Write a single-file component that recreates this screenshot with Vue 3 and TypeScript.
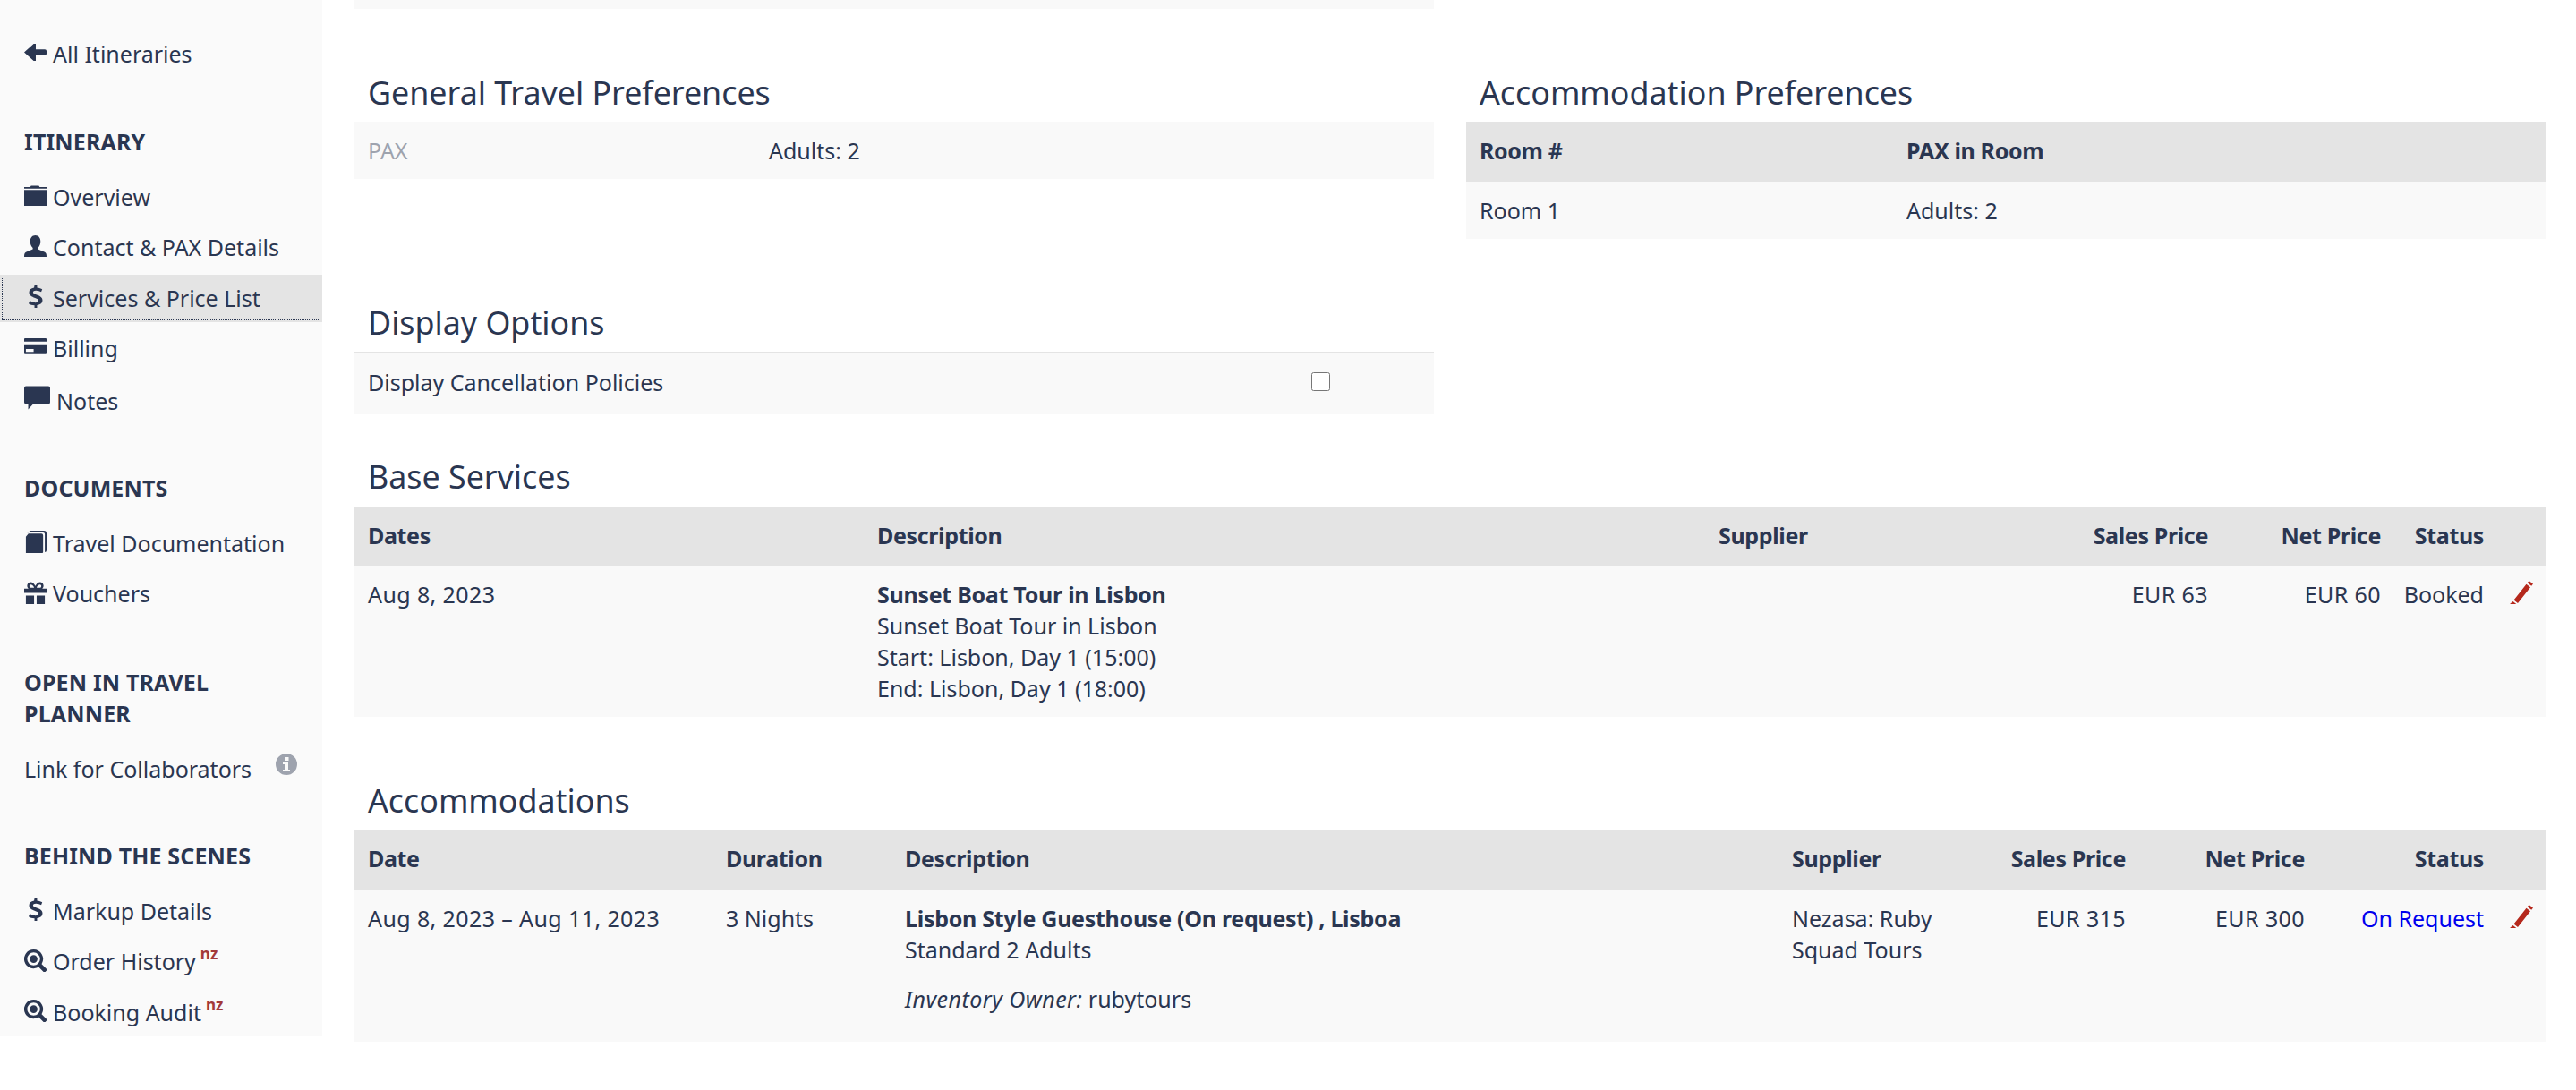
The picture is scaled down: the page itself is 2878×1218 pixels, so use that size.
<script setup lang="ts">
type Item = { label: string; icon: string; active?: boolean; nz?: boolean; wide?: boolean }
const paths: Record<string, string> = {
  back: 'M0 13 11 3h2.500v6.500H24a2 2 0 0 1 2 2v3a2 2 0 0 1-2 2H13.500V23H11z',
  folder: 'M0 3h7l1-1.500h9l1 1.500h8v2H0zM0 6.500h26V25H0z',
  user: 'M13 0c3.800 0 6 3 6 7 0 3-1 5.500-3 7.500v1.500l8 3.500c1.500.7 2 2.500 2 5.500H0c0-3 .5-4.800 2-5.500l8-3.500v-1.500c-2-2-3-4.500-3-7.500 0-4 2.200-7 6-7z',
  usd: 'M12 0h3v2.600c2.600.3 4.700 1.100 6 1.900l-1.200 3.100c-1.600-.9-3.700-1.700-6.100-1.700-2.200 0-3.400.8-3.400 2 0 1.400 1.400 2 4.300 3 4.300 1.400 6.700 3.100 6.700 6.300 0 3-2.200 5.200-6.300 5.800V26h-3v-2.800c-2.700-.2-5.300-1.100-6.800-2.200l1.300-3.200c1.800 1.200 4.100 2.100 6.500 2.100 2.300 0 3.700-.9 3.700-2.300 0-1.400-1.200-2.100-4-3.100-4.100-1.400-7-3-7-6.400 0-2.900 2.100-5 5.800-5.500z',
  card: 'M1 2h24a1 1 0 0 1 1 1v3H0V3a1 1 0 0 1 1-1zM0 9h26v10.500a1 1 0 0 1-1 1H1a1 1 0 0 1-1-1zm2 5.500V18h9v-3.500z',
  comment: 'M2 0h25a2 2 0 0 1 2 2v16a2 2 0 0 1-2 2H10l-5.500 6v-6H2a2 2 0 0 1-2-2V2a2 2 0 0 1 2-2z',
  book: 'M7 0h16a3 3 0 0 1 3 3v20a2 2 0 0 1-2 2V4a2 2 0 0 0-2-2H6a3 3 0 0 0-3 1.500zM5 3.500h15a2 2 0 0 1 2 2V25a1 1 0 0 1-1 1H2V7z',
  gift: 'M2 26h9.500V16H2zM14.500 26H24V16h-9.500zM0 8h5C3 6.500 3 3 5 1.500 7.500-.5 11 1 13 5c2-4 5.500-5.500 8-3.500C23 3 23 6.500 21 8h5v5H0zm7.500-4.500C6 3.500 5.500 6 7 7h4.500C11 5 9 3.500 7.500 3.500zm11 0C17 3.500 15 5 14.500 7H19c1.500-1 1-3.500-.5-3.500z',
  zoom: 'M11 0a11 11 0 0 1 9.300 16.800l5.700 5.700a1.500 1.500 0 0 1 0 2L24.500 26a1.500 1.500 0 0 1-2 0l-5.700-5.700A11 11 0 1 1 11 0zm0 3.500a7.500 7.500 0 1 0 0 15 7.500 7.500 0 0 0 0-15zM11 6.500a4.500 4.500 0 1 1 0 9 4.500 4.500 0 0 1 0-9z',
}
const pencil = 'M21.500 0l4.500 3.500-1.800 2.300-4.500-3.500zM18.500 3.800 23 7.300 9 25l-4.500-3.500zM3.500 23l3.800 3H0z'
const groups: { title: string; cls: string; items: Item[] }[] = [
  {
    title: 'ITINERARY',
    cls: 'g-itin',
    items: [
      { label: 'Overview', icon: 'folder' },
      { label: 'Contact & PAX Details', icon: 'user' },
      { label: 'Services & Price List', icon: 'usd', active: true },
      { label: 'Billing', icon: 'card' },
      { label: 'Notes', icon: 'comment', wide: true },
    ],
  },
  {
    title: 'DOCUMENTS',
    cls: 'g-docs',
    items: [
      { label: 'Travel Documentation', icon: 'book' },
      { label: 'Vouchers', icon: 'gift' },
    ],
  },
]
const behind: Item[] = [
  { label: 'Markup Details', icon: 'usd' },
  { label: 'Order History', icon: 'zoom', nz: true },
  { label: 'Booking Audit', icon: 'zoom', nz: true },
]
</script>

<template>
  <div class="page">
    <aside class="side">
      <a class="item">
        <svg class="ic" viewBox="0 0 26 26"><path :d="paths.back" /></svg>
        <span>All Itineraries</span>
      </a>
      <section v-for="g in groups" :key="g.title" :class="g.cls">
        <h3>{{ g.title }}</h3>
        <a v-for="it in g.items" :key="it.label" class="item" :class="{ active: it.active, notes: it.wide }">
          <svg class="ic" :class="{ wide: it.wide }" :viewBox="it.wide ? '0 0 29 26' : '0 0 26 26'">
            <path fill-rule="evenodd" :d="paths[it.icon]" />
          </svg>
          <span>{{ it.label }}</span>
        </a>
      </section>
      <section class="g-open">
        <h3>OPEN IN TRAVEL PLANNER</h3>
        <a class="item plain">
          <span>Link for Collaborators</span>
          <svg class="info" viewBox="0 0 24 24"><path fill-rule="evenodd" d="M12 0a12 12 0 1 1 0 24 12 12 0 0 1 0-24zM10 4v4h4.500V4zM8 10v2h2v6H8v2h8v-2h-2v-8z" /></svg>
        </a>
      </section>
      <section class="g-behind">
        <h3>BEHIND THE SCENES</h3>
        <a v-for="it in behind" :key="it.label" class="item">
          <svg class="ic" viewBox="0 0 26 26"><path fill-rule="evenodd" :d="paths[it.icon]" /></svg>
          <span>{{ it.label }}</span><sup v-if="it.nz">nz</sup>
        </a>
      </section>
    </aside>

    <main class="main">
      <div class="topband"></div>
      <div class="prefs">
        <div>
          <h2>General Travel Preferences</h2>
          <div class="row kv"><span class="muted">PAX</span><span>Adults: 2</span></div>
        </div>
        <div>
          <h2>Accommodation Preferences</h2>
          <div class="head rooms"><span>Room #</span><span>PAX in Room</span></div>
          <div class="row rooms"><span>Room 1</span><span>Adults: 2</span></div>
        </div>
      </div>

      <div class="display">
        <h2>Display Options</h2>
        <div class="row opt">
          <span>Display Cancellation Policies</span>
          <input type="checkbox" />
        </div>
      </div>

      <h2 class="t-base">Base Services</h2>
      <div class="head base">
        <span>Dates</span><span>Description</span><span>Supplier</span>
        <span class="r">Sales Price</span><span class="r">Net Price</span><span class="r">Status</span><span></span>
      </div>
      <div class="row base b-row">
        <span class="num">Aug 8, 2023</span>
        <div class="desc">
          <strong>Sunset Boat Tour in Lisbon</strong>
          <div>Sunset Boat Tour in Lisbon</div>
          <div>Start: Lisbon, Day 1 (15:00)</div>
          <div>End: Lisbon, Day 1 (18:00)</div>
        </div>
        <span></span>
        <span class="r num">EUR 63</span><span class="r num">EUR 60</span><span class="r">Booked</span>
        <svg class="pencil" viewBox="0 0 26 26"><path :d="pencil" /></svg>
      </div>

      <h2 class="t-acc">Accommodations</h2>
      <div class="head acc">
        <span>Date</span><span>Duration</span><span>Description</span><span>Supplier</span>
        <span class="r">Sales Price</span><span class="r">Net Price</span><span class="r">Status</span><span></span>
      </div>
      <div class="row acc a-row">
        <span class="num">Aug 8, 2023 – Aug 11, 2023</span>
        <span>3 Nights</span>
        <div class="desc">
          <strong>Lisbon Style Guesthouse (On request) , Lisboa</strong>
          <div>Standard 2 Adults</div>
          <div class="owner"><em>Inventory Owner:</em> rubytours</div>
        </div>
        <span>Nezasa: Ruby<br />Squad Tours</span>
        <span class="r num">EUR 315</span><span class="r num">EUR 300</span><span class="r blue">On Request</span>
        <svg class="pencil" viewBox="0 0 26 26"><path :d="pencil" /></svg>
      </div>
    </main>
  </div>
</template>

<style>
html, body { margin: 0; background: #fff; overflow: hidden; }
</style>

<style scoped>
.page {
  display: flex;
  align-items: flex-start;
  height: 1218px;
  overflow: hidden;
  font-family: "Noto Sans", "Open Sans", sans-serif;
  font-size: 25px;
  line-height: 35px;
  color: #2a3651;
}
.side {
  width: 360px;
  height: 1158px;
  flex: none;
  background: #fafafa;
  box-sizing: border-box;
  padding-top: 33.500px;
}
.side h3 {
  margin: 0 0 18px;
  padding: 0 27px;
  font-size: 25px;
  line-height: 35px;
  font-weight: 700;
  letter-spacing: .15px;
}
.item {
  display: flex;
  align-items: center;
  height: 53px;
  margin-bottom: 3.500px;
  padding: 0 27px;
  gap: 7px;
  box-sizing: border-box;
  white-space: nowrap;
}
.item.notes { margin-top: 5.500px; }
.item.active {
  background: #e4e4e4;
  outline: 1px dotted #2a3651;
  outline-offset: -3px;
}
.ic { width: 25px; height: 25px; fill: #2a3651; flex: none; margin-top: -3px; }
.ic.wide { width: 29px; height: 27px; margin-top: -7px; }
sup {
  color: #a33a3a;
  font-size: 17px;
  font-weight: 700;
  line-height: 1;
  align-self: flex-start;
  margin: 9px 0 0 -2px;
}
.g-itin { margin-top: 54px; }
.g-docs { margin-top: 53px; }
.g-open { margin-top: 54.500px; }
.g-behind { margin-top: 53px; }
.plain { justify-content: space-between; padding-right: 28px; }
.info { width: 24px; height: 24px; fill: #9ea3ae; margin-top: -10px; }

.main { width: 2448px; margin-left: 36px; flex: none; }
.topband { width: 1206px; height: 10px; background: #f9f9f9; }
h2 { margin: 0; padding: 0 15px; font-size: 35.800px; line-height: 50px; font-weight: 400; }
.prefs { display: grid; grid-template-columns: 1206px 1206px; column-gap: 36px; margin-top: 68px; }
.prefs h2 { margin-bottom: 8px; }
.row { background: #f9f9f9; box-sizing: border-box; }
.head { background: #e4e4e4; font-weight: 700; letter-spacing: -.35px; box-sizing: border-box; white-space: nowrap; }
.kv { display: grid; grid-template-columns: 448px 1fr; padding: 15px; height: 64px; }
.muted { color: #9ea3ae; }
.rooms { display: grid; grid-template-columns: 477px 1fr; padding: 15px; }
.head.rooms { height: 67px; }
.row.rooms { height: 64px; }
.display { width: 1206px; margin-top: 68px; }
.display h2 { margin-bottom: 8px; }
.opt {
  height: 70px;
  border-top: 2px solid #e4e4e4;
  padding: 15px;
  display: flex;
  justify-content: space-between;
}
.opt input { margin: 6px 101px 0 0; width: 21px; height: 21px; }
.t-base { margin-top: 44px; margin-bottom: 9px; }
.base { display: grid; grid-template-columns: 569px 940px 380px 167px 193px 115px 1fr; padding: 15px; }
.head.base { height: 66px; }
.b-row { height: 169px; }
.r { text-align: right; white-space: nowrap; }
.num { letter-spacing: .4px; }
strong { font-weight: 700; letter-spacing: -.28px; }
em { letter-spacing: .45px; }
.t-acc { margin-top: 68px; margin-bottom: 8px; }
.acc { display: grid; grid-template-columns: 400px 200px 991px 200px 173px 200px 200px 1fr; padding: 15px; }
.head.acc { height: 67px; }
.a-row { height: 170px; }
.owner { margin-top: 20px; }
.blue { color: #0000ee; }
.pencil { width: 26px; height: 26px; fill: #b5281c; margin: 2px 0 0 29px; }
</style>
